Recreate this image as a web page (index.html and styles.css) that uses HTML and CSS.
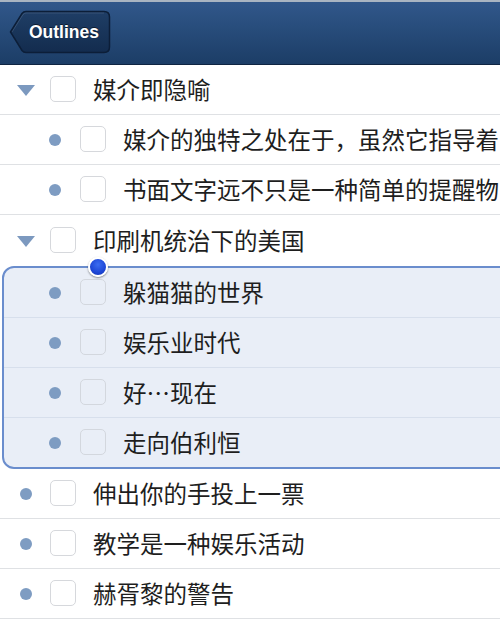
FILE: index.html
```html
<!DOCTYPE html>
<html lang="zh">
<head>
<meta charset="utf-8">
<link rel="stylesheet" href="styles.css">
</head>
<body>
<div class="screen">
  <header class="navbar">
    <div class="back">
      <svg class="back-shape" width="102" height="44" viewBox="0 0 102 44">
        <defs>
          <linearGradient id="bg" x1="0" y1="0" x2="0" y2="1">
            <stop offset="0" stop-color="#1f3e66"/>
            <stop offset="1" stop-color="#132c4e"/>
          </linearGradient>
        </defs>
        <path d="M1.5 22 L13 3.5 Q14.5 1.5 17 1.5 L95 1.5 Q100.5 1.5 100.5 7 L100.5 37 Q100.5 42.5 95 42.5 L17 42.5 Q14.5 42.5 13 40.5 Z" fill="url(#bg)" stroke="#0c1e38" stroke-width="1.5"/>
        <path d="M3 22 L14 4.5 Q15.5 3 17 3 L95 3" fill="none" stroke="rgba(255,255,255,0.12)" stroke-width="1"/>
      </svg>
      <span class="back-label">Outlines</span>
    </div>
  </header>

  <div class="list">
    <div class="row lvl1">
      <span class="tri"></span><span class="box"></span><span class="txt">媒介即隐喻</span>
    </div>
    <div class="row lvl2">
      <span class="dot"></span><span class="box"></span><span class="txt">媒介的独特之处在于，虽然它指导着</span>
    </div>
    <div class="row lvl2">
      <span class="dot"></span><span class="box"></span><span class="txt">书面文字远不只是一种简单的提醒物</span>
    </div>
    <div class="row lvl1 last-before-sel">
      <span class="tri"></span><span class="box"></span><span class="txt">印刷机统治下的美国</span>
    </div>

    <div class="selection">
      <span class="knob"></span>
      <div class="row lvl2 sel">
        <span class="dot"></span><span class="box"></span><span class="txt">躲猫猫的世界</span>
      </div>
      <div class="row lvl2 sel">
        <span class="dot"></span><span class="box"></span><span class="txt">娱乐业时代</span>
      </div>
      <div class="row lvl2 sel">
        <span class="dot"></span><span class="box"></span><span class="txt">好…现在</span>
      </div>
      <div class="row lvl2 sel lastsel">
        <span class="dot"></span><span class="box"></span><span class="txt">走向伯利恒</span>
      </div>
    </div>

    <div class="row lvl1b">
      <span class="dot"></span><span class="box"></span><span class="txt">伸出你的手投上一票</span>
    </div>
    <div class="row lvl1b">
      <span class="dot"></span><span class="box"></span><span class="txt">教学是一种娱乐活动</span>
    </div>
    <div class="row lvl1b">
      <span class="dot"></span><span class="box"></span><span class="txt">赫胥黎的警告</span>
    </div>
  </div>
</div>
</body>
</html>
```

FILE: styles.css
```css
html, body {
  margin: 0;
  padding: 0;
  background: #ffffff;
}

.screen {
  width: 500px;
  height: 620px;
  overflow: hidden;
  font-family: "Noto Sans CJK SC", "Noto Sans", sans-serif;
  color: #1e1e1e;
}

.navbar {
  height: 65px;
  box-sizing: border-box;
  border-top: 2px solid #a9b4c1;
  border-bottom: 1px solid #0f2442;
  background: linear-gradient(#31578a 0%, #284d7c 40%, #1c3d66 100%);
  display: flex;
  align-items: center;
  padding-left: 9px;
}

.back {
  position: relative;
  width: 102px;
  height: 44px;
  display: flex;
  align-items: center;
  justify-content: center;
  margin-top: -2px;
}

.back-shape {
  position: absolute;
  left: 0;
  top: 0;
}

.back-label {
  position: relative;
  margin-left: 8px;
  font-family: "Liberation Sans", Arial, sans-serif;
  font-weight: bold;
  font-size: 17.5px;
  color: #ffffff;
  text-shadow: 0 -1px 0 rgba(0, 0, 0, 0.5);
}

.list {
  display: flex;
  flex-direction: column;
}

.row {
  height: 50px;
  box-sizing: border-box;
  border-bottom: 1px solid #dfe1e4;
  display: flex;
  align-items: center;
  white-space: nowrap;
  flex-shrink: 0;
  overflow: hidden;
}

.row.lvl1 { padding-left: 17px; }
.row.lvl1b { padding-left: 20px; }
.row.lvl2 { padding-left: 49px; }

.last-before-sel { border-bottom: none; height: 51px; }

.tri {
  flex-shrink: 0;
  width: 0;
  height: 0;
  border-left: 9px solid transparent;
  border-right: 9px solid transparent;
  border-top: 11px solid #7c99bf;
  margin-right: 15px;
  margin-top: 2px;
}

.dot {
  flex-shrink: 0;
  width: 12px;
  height: 12px;
  border-radius: 50%;
  background: #7e9cc2;
  margin-right: 19px;
}

.box {
  flex-shrink: 0;
  width: 26px;
  height: 26px;
  box-sizing: border-box;
  border: 1px solid #d6d8dc;
  border-radius: 5px;
  background: #ffffff;
  margin-right: 17px;
  margin-top: -1px;
}

.lvl1b .dot { margin-right: 18px; }

.txt {
  flex-shrink: 0;
  font-size: 23.5px;
  line-height: 1;
  margin-top: 1px;
}

.selection {
  position: relative;
  margin-left: 2px;
  margin-right: -20px;
  border: 2px solid #6a8dcd;
  border-radius: 12px;
  background: #e9eef7;
  display: flex;
  flex-direction: column;
}

.selection .row.lvl2 { padding-left: 45px; border-bottom-color: #d7dfec; }
.selection .row.lastsel { border-bottom: none; height: 49px; }
.selection .box { background: transparent; border-color: #d3d7de; }

.knob {
  position: absolute;
  top: -11px;
  left: 84px;
  width: 16px;
  height: 16px;
  border-radius: 50%;
  background: radial-gradient(circle at 50% 35%, #3b6cf0 0%, #1d46d6 60%, #1236b0 100%);
  border: 2px solid #ffffff;
  box-shadow: 0 1px 2px rgba(0, 0, 0, 0.45);
  z-index: 2;
}
```
